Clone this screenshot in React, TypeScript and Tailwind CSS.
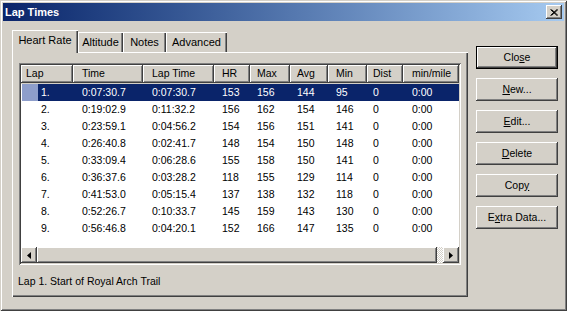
import type { ReactNode } from 'react'

const raised = 'shadow-[inset_-1px_-1px_#404040,inset_1px_1px_#ffffff,inset_-2px_-2px_#808080,inset_2px_2px_#d4d0c8]'
const sunken = 'shadow-[inset_1px_1px_#808080,inset_-1px_-1px_#ffffff,inset_2px_2px_#404040,inset_-2px_-2px_#d4d0c8]'
const headerBevel = 'shadow-[inset_-1px_-1px_#404040,inset_1px_1px_#ffffff,inset_-2px_-2px_#808080]'

const columns = [
	{ name: 'Lap', w: 'w-[52px] pl-[5px]' },
	{ name: 'Time', w: 'w-[70px] pl-[9px]' },
	{ name: 'Lap Time', w: 'w-[71px] pl-[9px]' },
	{ name: 'HR', w: 'w-[36px] pl-[8px]' },
	{ name: 'Max', w: 'w-[40px] pl-[7px]' },
	{ name: 'Avg', w: 'w-[38px] pl-[7px]' },
	{ name: 'Min', w: 'w-[39px] pl-[8px]' },
	{ name: 'Dist', w: 'w-[36px] pl-[6px]' },
	{ name: 'min/mile', w: 'w-[56px] pl-[9px]' },
]

const laps = [
	['1.', '0:07:30.7', '0:07:30.7', '153', '156', '144', '95', '0', '0:00'],
	['2.', '0:19:02.9', '0:11:32.2', '156', '162', '154', '146', '0', '0:00'],
	['3.', '0:23:59.1', '0:04:56.2', '154', '156', '151', '141', '0', '0:00'],
	['4.', '0:26:40.8', '0:02:41.7', '148', '154', '150', '148', '0', '0:00'],
	['5.', '0:33:09.4', '0:06:28.6', '155', '158', '150', '141', '0', '0:00'],
	['6.', '0:36:37.6', '0:03:28.2', '118', '155', '129', '114', '0', '0:00'],
	['7.', '0:41:53.0', '0:05:15.4', '137', '138', '132', '118', '0', '0:00'],
	['8.', '0:52:26.7', '0:10:33.7', '145', '159', '143', '130', '0', '0:00'],
	['9.', '0:56:46.8', '0:04:20.1', '152', '166', '147', '135', '0', '0:00'],
]

const tabs = [
	{ label: 'Heart Rate', w: 'w-[66px]', active: true },
	{ label: 'Altitude', w: 'w-[45px]' },
	{ label: 'Notes', w: 'w-[43px]' },
	{ label: 'Advanced', w: 'w-[61px]' },
]

function Button({ children, isDefault }: { children: ReactNode; isDefault?: boolean }) {
	if (isDefault) {
		return (
			<div className="w-[82px] h-[23px] border border-black">
				<div className={`w-full h-full flex items-center justify-center ${raised}`}>{children}</div>
			</div>
		)
	}
	return <div className={`w-[82px] h-[23px] flex items-center justify-center ${raised}`}>{children}</div>
}

function Arrow({ left }: { left?: boolean }) {
	return (
		<div className={`w-[16px] h-[16px] flex items-center justify-center bg-[#d4d0c8] ${raised}`}>
			<svg width="4" height="7" viewBox="0 0 4 7">
				<path d={left ? 'M4 0 L0 3.5 L4 7 Z' : 'M0 0 L4 3.5 L0 7 Z'} fill="#000" />
			</svg>
		</div>
	)
}

export default function App() {
	return (
		<div
			className={`w-[567px] h-[311px] bg-[#d4d0c8] p-[3px] flex flex-col text-black text-[10.5px] font-['Liberation_Sans',Arial,sans-serif] shadow-[inset_1px_1px_#d4d0c8,inset_-1px_-1px_#404040,inset_2px_2px_#ffffff,inset_-2px_-2px_#808080]`}
		>
			{/* title bar */}
			<div className="h-[18px] flex items-center justify-between pl-[2px] pr-[2px] bg-linear-to-r from-[#0a246a] to-[#a6caf0]">
				<span className="text-white font-bold text-[11px]">Lap Times</span>
				<div className={`w-[16px] h-[14px] bg-[#d4d0c8] flex items-center justify-center ${raised}`}>
					<svg width="8" height="7" viewBox="0 0 8 7">
						<path d="M0.5 0.5 L7 6.5 M1.5 0.5 L8 6.5 M7 0.5 L0.5 6.5 M8 0.5 L1.5 6.5" stroke="#000" strokeWidth="1" />
					</svg>
				</div>
			</div>

			<div className="flex pl-[9px] pt-[9px] gap-[8px]">
				{/* tabs + panel */}
				<div className="w-[456px] flex flex-col">
					<div className="h-[22px] flex items-end">
						{tabs.map((t) =>
							t.active ? (
								<div
									key={t.label}
									className={`${t.w} h-[23px] -mb-px relative z-10 bg-[#d4d0c8] flex items-center justify-center pb-[2px] text-[11px] shadow-[inset_1px_1px_#ffffff,inset_-1px_0_#404040,inset_-2px_0_#808080]`}
								>
									{t.label}
								</div>
							) : (
								<div
									key={t.label}
									className={`${t.w} h-[20px] flex items-center justify-center pt-[1px] text-[11px] shadow-[inset_1px_1px_#ffffff,inset_-1px_0_#404040,inset_-2px_0_#808080]`}
								>
									{t.label}
								</div>
							),
						)}
					</div>
					<div className="h-[245px] pl-[7px] pt-[11px] flex flex-col shadow-[inset_1px_1px_#ffffff,inset_-1px_-1px_#404040,inset_-2px_-2px_#808080]">
						{/* list view */}
						<div className={`w-[442px] h-[202px] bg-white p-[2px] flex flex-col ${sunken}`}>
							<div className="h-[19px] flex shrink-0 bg-[#d4d0c8]">
								{columns.map((c) => (
									<div key={c.name} className={`${c.w} h-[18px] flex items-center ${headerBevel}`}>
										{c.name}
									</div>
								))}
							</div>
							<div className="flex flex-col bg-white">
								{laps.map((r, i) => (
									<div key={r[0]} className="h-[17px] flex items-center relative">
										{i === 0 && (
											<>
												<div className="absolute left-[1px] top-0 w-[16px] h-[17px] bg-[#8e9ecb]" />
												<div className="absolute left-[17px] right-0 top-0 h-[17px] bg-[#0a246a]" />
											</>
										)}
										{r.map((v, j) => (
											<div
												key={j}
												className={`${columns[j].w} ${j === 0 ? 'pl-[20px]' : ''} relative ${i === 0 ? 'text-white' : ''}`}
											>
												{v}
											</div>
										))}
									</div>
								))}
							</div>
							<div className="flex-1 bg-white" />
							{/* horizontal scrollbar */}
							<div className="h-[16px] flex shrink-0">
								<Arrow left />
								<div className="flex-1 flex bg-[repeating-conic-gradient(#ffffff_0_25%,#d4d0c8_0_50%)] bg-size-[2px_2px]">
									<div className={`w-[400px] h-[16px] bg-[#d4d0c8] ${raised}`} />
								</div>
								<Arrow />
							</div>
						</div>
						<div className="mt-[9px] -ml-px">Lap 1. Start of Royal Arch Trail</div>
					</div>
				</div>

				{/* buttons */}
				<div className="flex flex-col gap-[9px] mt-[16px]">
					<Button isDefault>
						<span>
							Clo<span className="underline">s</span>e
						</span>
					</Button>
					<Button>
						<span>
							<span className="underline">N</span>ew...
						</span>
					</Button>
					<Button>
						<span>
							<span className="underline">E</span>dit...
						</span>
					</Button>
					<Button>
						<span>
							<span className="underline">D</span>elete
						</span>
					</Button>
					<Button>
						<span>
							Cop<span className="underline">y</span>
						</span>
					</Button>
					<Button>
						<span>
							E<span className="underline">x</span>tra Data...
						</span>
					</Button>
				</div>
			</div>
		</div>
	)
}
